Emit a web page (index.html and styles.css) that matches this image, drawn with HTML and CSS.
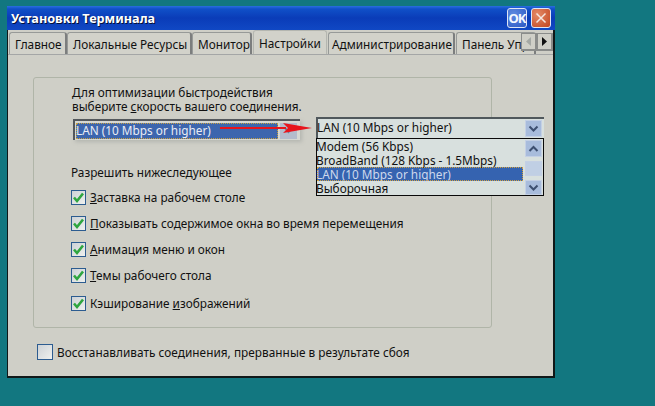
FILE: index.html
```html
<!DOCTYPE html>
<html lang="ru">
<head>
<meta charset="utf-8">
<title>Установки Терминала</title>
<link rel="stylesheet" href="styles.css">
</head>
<body>
<div class="window">
  <header class="titlebar">
    <span class="title">Установки Терминала</span>
    <span class="tbtn ok">OK</span>
    <span class="tbtn close"><svg width="14" height="14" viewBox="0 0 14 14"><path d="M2.5 2.5 11.5 11.5M11.5 2.5 2.5 11.5" stroke="#f4e6e0" stroke-width="1.5" fill="none"/></svg></span>
  </header>
  <nav class="tabs">
    <span class="tab t1">Главное</span>
    <span class="tab t2">Локальные Ресурсы</span>
    <span class="tab t3">Монитор</span>
    <span class="tab active">Настройки</span>
    <span class="tab t5">Администрирование</span>
    <span class="tab t6">Панель Упр</span>
    <span class="scrollers">
      <span class="sbtn"><svg width="7" height="9" viewBox="0 0 7 9"><path d="M6 0V9L1 4.5Z" fill="#a4a8a4"/></svg></span>
      <span class="sbtn"><svg width="7" height="9" viewBox="0 0 7 9"><path d="M1 0V9L6 4.5Z" fill="#111"/></svg></span>
    </span>
  </nav>
  <main class="page">
    <section class="group">
      <p class="intro">Для оптимизации быстродействия<br>выберите <u>с</u>корость вашего соединения.</p>
      <div class="combo-small">
        <span class="combo-small-text">LAN (10 Mbps or higher)</span>
        <span class="combo-small-btn"><svg width="9" height="7" viewBox="0 0 9 7"><path d="M1 1 4.5 5 8 1" stroke="#6d7fa0" stroke-width="2" fill="none"/></svg></span>
      </div>
      <p class="allow">Разрешить нижеследующее</p>
      <ul class="checks">
        <li><span class="cb"><svg width="13" height="13" viewBox="0 0 13 13"><path d="M2 6.5 5 10 11 2.5" stroke="#2fa640" stroke-width="2.6" fill="none"/></svg></span><span><u>З</u>аставка на рабочем столе</span></li>
        <li><span class="cb"><svg width="13" height="13" viewBox="0 0 13 13"><path d="M2 6.5 5 10 11 2.5" stroke="#2fa640" stroke-width="2.6" fill="none"/></svg></span><span><u>П</u>оказывать содержимое окна во время перемещения</span></li>
        <li><span class="cb"><svg width="13" height="13" viewBox="0 0 13 13"><path d="M2 6.5 5 10 11 2.5" stroke="#2fa640" stroke-width="2.6" fill="none"/></svg></span><span><u>А</u>нимация меню и окон</span></li>
        <li><span class="cb"><svg width="13" height="13" viewBox="0 0 13 13"><path d="M2 6.5 5 10 11 2.5" stroke="#2fa640" stroke-width="2.6" fill="none"/></svg></span><span><u>Т</u>емы рабочего стола</span></li>
        <li class="last"><span class="cb"><svg width="13" height="13" viewBox="0 0 13 13"><path d="M2 6.5 5 10 11 2.5" stroke="#2fa640" stroke-width="2.6" fill="none"/></svg></span><span>Кэширование <u>и</u>зображений</span></li>
      </ul>
    </section>
    <div class="restore"><span class="cb"></span><span>Восстанавливать соединения, прерванные в результате сбоя</span></div>
    <div class="dropdown">
      <div class="dd-head">
        <span class="dd-value">LAN (10 Mbps or higher)</span>
        <span class="xp-btn"><svg width="11" height="8" viewBox="0 0 11 8"><path d="M1.5 1.5 5.5 5.5 9.5 1.5" stroke="#3d4f70" stroke-width="2" fill="none"/></svg></span>
      </div>
      <div class="dd-list">
        <div class="dd-items">
          <div class="dd-item">Modem (56 Kbps)</div>
          <div class="dd-item">BroadBand (128 Kbps - 1.5Mbps)</div>
          <div class="dd-item sel">LAN (10 Mbps or higher)</div>
          <div class="dd-item">Выборочная</div>
        </div>
        <div class="dd-scroll">
          <span class="xp-btn"><svg width="11" height="8" viewBox="0 0 11 8"><path d="M1.5 6 5.5 2 9.5 6" stroke="#3d4f70" stroke-width="2" fill="none"/></svg></span>
          <span class="xp-btn thumb"></span>
          <span class="xp-btn down"><svg width="11" height="8" viewBox="0 0 11 8"><path d="M1.5 1.5 5.5 5.5 9.5 1.5" stroke="#3d4f70" stroke-width="2" fill="none"/></svg></span>
        </div>
      </div>
    </div>
    <svg class="arrow" width="92" height="10" viewBox="0 0 92 10"><path d="M0 4H66V6H0Z" fill="#e8141c"/><path d="M63 0 92 5 63 10 68 5Z" fill="#e8141c"/></svg>
  </main>
</div>
</body>
</html>
```
FILE: styles.css
```css
* { box-sizing: border-box; }
html, body { margin: 0; height: 100%; }
body {
  background: #127780;
  font-family: "Noto Sans", "Liberation Sans", sans-serif;
  font-size: 11.8px;
  color: #111;
  overflow: hidden;
  padding: 6px 0 0 7px;
}
p, ul { margin: 0; padding: 0; }
li { list-style: none; }
.window {
  position: relative;
  width: 548px;
  height: 372px;
  background: #cfcfc7;
  border-right: 2px solid #101818;
  border-bottom: 2px solid #101818;
  border-left: 1px solid #101818;
}
.titlebar {
  margin-left: -1px;
  margin-right: -2px;
  height: 24px;
  display: flex;
  align-items: center;
  padding: 0 4px 0 3px;
  gap: 4px;
  background: linear-gradient(#2a6ee0 0, #1050c8 3px, #0a3cb8 50%, #1048c4 100%);
}
.title {
  flex: 1;
  color: #fff;
  font-size: 12.7px;
  font-weight: 700;
  padding-left: 1px;
  text-shadow: 1px 1px 0 #041038;
}
.tbtn {
  width: 20px;
  height: 20px;
  display: flex;
  align-items: center;
  justify-content: center;
  border: 1px solid #dfe6f4;
  border-radius: 3px;
  color: #f4f8ff;
  font-weight: 700;
  font-size: 13px;
  letter-spacing: -1px;
}
.ok { background: radial-gradient(circle at 30% 30%, #5d8ae0, #2c58c4); }
.close { background: radial-gradient(circle at 30% 30%, #e48a66, #c2451f); }
.tabs {
  position: relative;
  display: flex;
  align-items: flex-end;
  height: 25px;
  padding-left: 1px;
  overflow: hidden;
  border-bottom: 1px solid #a4a6a6;
}
.tab {
  height: 22px;
  display: flex;
  align-items: center;
  padding: 0 2px 0 5px;
  border: 1px solid #979a98;
  border-bottom: 0;
  border-right: 2px solid #7c7e7e;
  border-radius: 3px 3px 0 0;
  white-space: nowrap;
  background: #d2d2ca;
  flex: none;
}
.t1 { width: 58px; }
.t2 { width: 125px; }
.t3 { width: 60px; }
.active { width: 74px; height: 24px; margin: 0 1px; border-color: #b4b6b0; border-right: 1px solid #b4b6b0; }
.t5 { width: 127px; padding-left: 3px; }
.t6 { width: 80px; margin-left: 1px; }
.scrollers {
  position: absolute;
  right: 0;
  top: 3px;
  display: flex;
}
.sbtn {
  width: 16px;
  height: 18px;
  display: flex;
  align-items: center;
  justify-content: center;
  background: #cfcfc7;
  border: 1px solid #8a8c8a;
  border-right-width: 2px;
  border-bottom-width: 2px;
}
.page {
  position: relative;
  padding: 22px 0 0 25px;
}
.group {
  width: 459px;
  height: 251px;
  border: 1px solid #b0b5a8;
  border-radius: 3px;
  padding: 7px 0 0 38px;
}
.intro { line-height: 14px; }
.combo-small {
  width: 227px;
  height: 21px;
  margin: 6px 0 0 1px;
  border-top: 2px solid #54585c;
  border-left: 2px solid #54585c;
  background: #d6d8d2;
  box-shadow: 2px 2px 4px #b4b6b0;
  display: flex;
  align-items: center;
  padding: 0 3px 0 1px;
}
.combo-small-text {
  flex: 1;
  height: 16px;
  line-height: 14px;
  background: #3d66ae;
  color: #e8ecf4;
  outline: 1px dotted #c8a040;
  outline-offset: -1px;
}
.combo-small-btn {
  width: 17px;
  height: 16px;
  margin-left: 2px;
  background: #b4bccc;
  display: flex;
  align-items: center;
  justify-content: center;
}
.allow { margin-top: 24px; line-height: 16px; margin-left: -1px; }
.checks { margin: 9px 0 0 -1px; display: flex; flex-direction: column; gap: 10px; }
.checks li, .restore { display: flex; align-items: center; gap: 4px; height: 16px; }
.checks .last { margin-top: 2px; }
.cb {
  width: 15px;
  height: 15px;
  flex: none;
  border: 1px solid #2c5c90;
  background: linear-gradient(135deg, #cdd2d6, #eef0ee);
  display: flex;
  align-items: center;
  justify-content: center;
}
.restore { margin: 16px 0 0 4px; }
.restore .cb { width: 16px; height: 16px; }
.restore span:last-child { letter-spacing: 0.035px; }
.dropdown {
  position: absolute;
  left: 308px;
  top: 62px;
  width: 228px;
  background: #d8e0de;
}
.dd-head {
  height: 21px;
  display: flex;
  align-items: center;
  justify-content: space-between;
  padding: 0 2px 0 0;
  border-top: 2px solid #50585c;
  border-left: 2px solid #50585c;
}
.dd-value { margin: -3px 0 0 -1px; }
.dd-list {
  display: flex;
  height: 58px;
  border: 1px solid #0a0a0a;
}
.dd-item { height: 14px; line-height: 14px; text-indent: -1px; }
.dd-items { flex: 1; }
.sel {
  background: #3563b0;
  color: #cdd8ec;
  outline: 1px dotted #d0a040;
  outline-offset: -1px;
}
.dd-scroll { width: 20px; display: flex; flex-direction: column; align-items: center; gap: 4px; padding-top: 1px; }
.xp-btn {
  width: 17px;
  height: 17px;
  flex: none;
  display: flex;
  align-items: center;
  justify-content: center;
  background: #a8bcdc;
  border: 1px solid #c4d0e4;
}
.thumb { height: 15px; background: #c0cfe4; }
.down { height: 15px; }
.arrow { position: absolute; left: 212px; top: 68px; }
```
